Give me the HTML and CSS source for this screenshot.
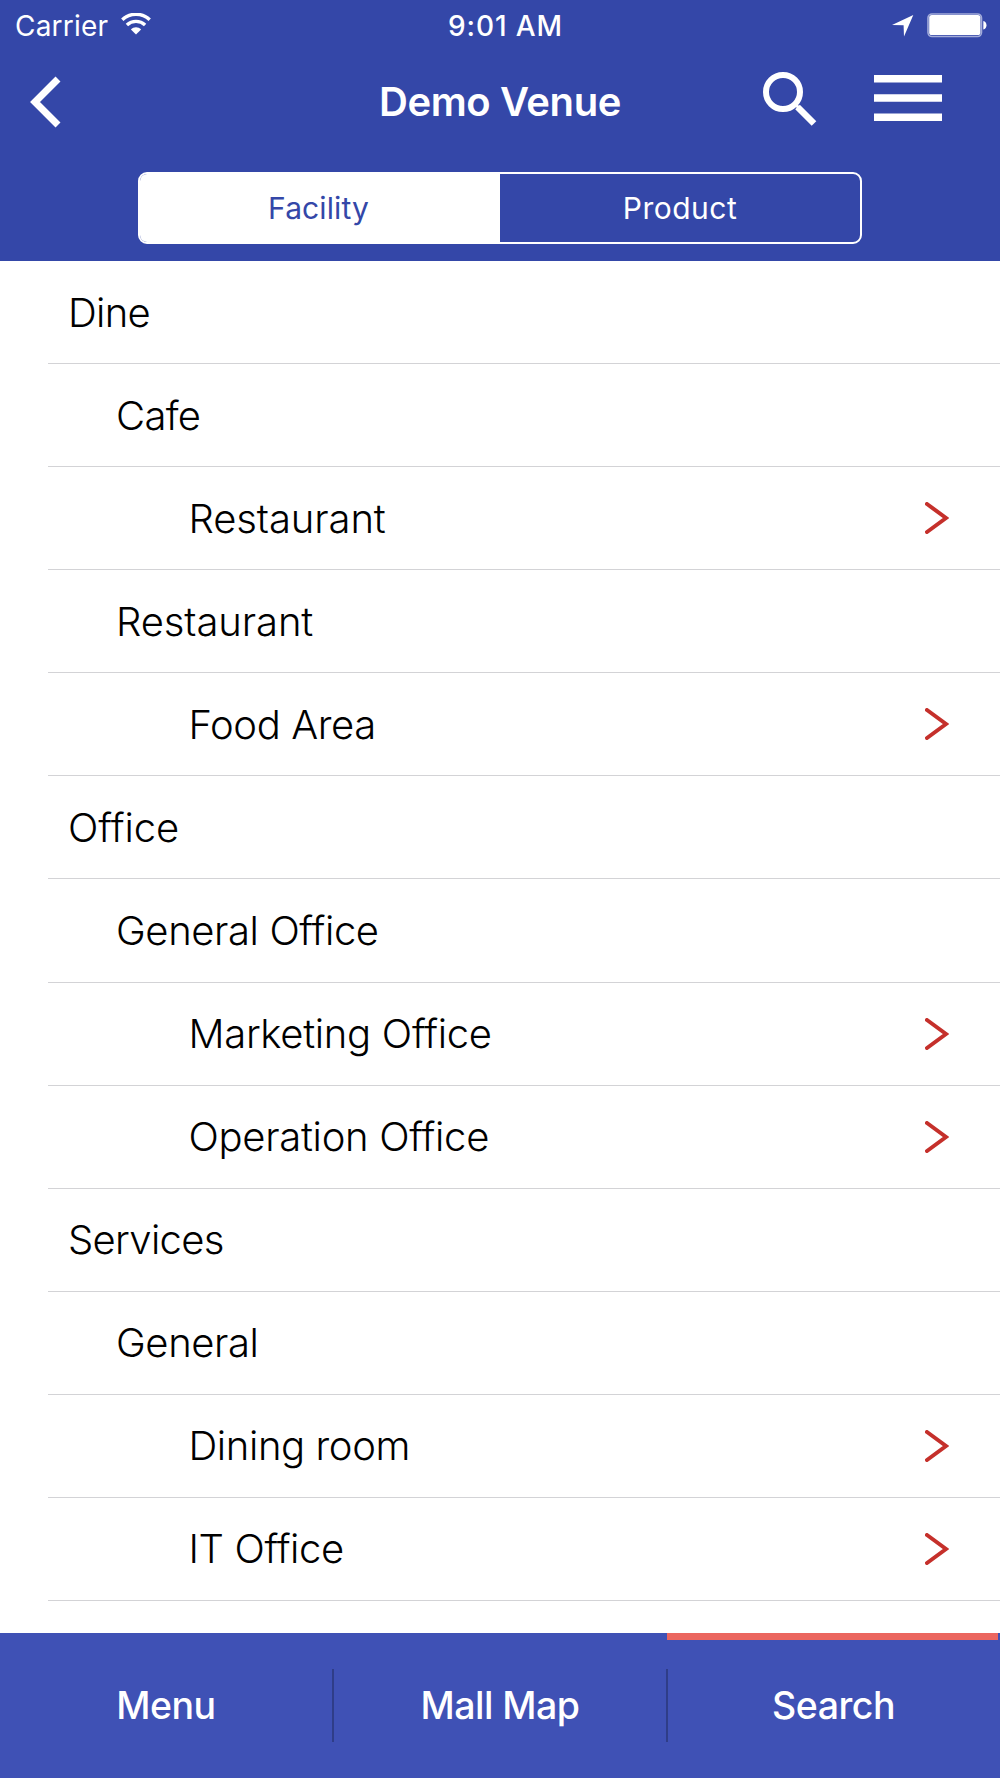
FILE: index.html
```html
<!DOCTYPE html>
<html lang="en">
<head>
<meta charset="utf-8">
<title>Demo Venue</title>
<link rel="stylesheet" href="styles.css">
</head>
<body>
<div class="app">
  <header class="header">
    <div class="status">
      <div class="status-left">
        <span class="carrier">Carrier</span>
        <svg class="wifi" width="30" height="22" viewBox="0 0 30 22" fill="none" stroke="#fff">
          <path d="M1.3 6.8C9 -0.6 21 -0.6 28.7 6.8" stroke-width="3.4"/>
          <path d="M5.9 11.9C11 7.2 19 7.2 24.1 11.9" stroke-width="3.4"/>
          <path d="M15 21.5L9.9 16.5C12.7 13.6 17.3 13.6 20.1 16.5Z" fill="#fff" stroke="none"/>
        </svg>
      </div>
      <span class="time">9:01 AM</span>
      <div class="status-right">
        <svg width="22" height="22" viewBox="0 0 22 22"><path d="M21.3 0L12 21.6L11.6 10.2L0 10Z" fill="#fff"/></svg>
        <svg width="60" height="25" viewBox="0 0 60 25">
          <rect x="1" y="1" width="53.5" height="22.5" rx="4" fill="none" stroke="#a3acd9" stroke-width="1.6"/>
          <rect x="2.2" y="2" width="51.2" height="20" rx="2.6" fill="#fff"/>
          <path d="M56.3 8C60.5 9 60.5 15.5 56.3 16.5Z" fill="#fff"/>
        </svg>
      </div>
    </div>
    <div class="navbar">
      <button class="icon-btn back" aria-label="Back"><svg width="31" height="52" viewBox="0 0 31 52"><path d="M28 3L5 26L28 49" fill="none" stroke="#fff" stroke-width="7"/></svg></button>
      <h1 class="title">Demo Venue</h1>
      <div class="actions">
        <button class="icon-btn" aria-label="Search"><svg width="54" height="54" viewBox="0 0 54 54" fill="none" stroke="#fff"><circle cx="20" cy="20" r="17" stroke-width="6"/><path d="M34.5 35L51 51.5" stroke-width="6.5"/><path d="M31 31L36 36" stroke-width="3"/></svg></button>
        <button class="icon-btn options" aria-label="Options"><svg width="68" height="46" viewBox="0 0 68 46" fill="#fff"><path d="M0 0h68v7.5H0zM0 19.2h68v7.5H0zM0 38.4h68v7.5H0z"/></svg></button>
      </div>
    </div>
    <div class="segments">
      <button class="segment active">Facility</button>
      <button class="segment">Product</button>
    </div>
  </header>
  <main class="list">
    <div class="row l1"><span class="tight">Dine</span></div>
    <div class="row l2"><span class="tight">Cafe</span></div>
    <div class="row l3"><span class="wide">Restaurant</span><svg class="chev" viewBox="0 0 24 32"><path d="M2 2L21 16L2 30"/></svg></div>
    <div class="row l2"><span class="wide">Restaurant</span></div>
    <div class="row l3"><span>Food Area</span><svg class="chev" viewBox="0 0 24 32"><path d="M2 2L21 16L2 30"/></svg></div>
    <div class="row l1"><span class="wide">Office</span></div>
    <div class="row l2"><span>General Office</span></div>
    <div class="row l3"><span class="roomy">Marketing Office</span><svg class="chev" viewBox="0 0 24 32"><path d="M2 2L21 16L2 30"/></svg></div>
    <div class="row l3"><span class="roomy">Operation Office</span><svg class="chev" viewBox="0 0 24 32"><path d="M2 2L21 16L2 30"/></svg></div>
    <div class="row l1"><span class="tight">Services</span></div>
    <div class="row l2"><span>General</span></div>
    <div class="row l3"><span>Dining room</span><svg class="chev" viewBox="0 0 24 32"><path d="M2 2L21 16L2 30"/></svg></div>
    <div class="row l3"><span>IT Office</span><svg class="chev" viewBox="0 0 24 32"><path d="M2 2L21 16L2 30"/></svg></div>
  </main>
  <nav class="tabs">
    <a class="tab">Menu</a>
    <a class="tab">Mall Map</a>
    <a class="tab current">Search</a>
  </nav>
</div>
</body>
</html>
```
FILE: styles.css
```css
* { box-sizing: border-box; }
body { margin: 0; font-family: Inter, "Liberation Sans", sans-serif; background: #fff; color: #000; }
button { border: 0; padding: 0; background: none; color: inherit; font: inherit; }
svg { display: block; }
h1 { margin: 0; }

.app { height: 1778px; display: flex; flex-direction: column; overflow: hidden; }

.header { height: 261px; flex: none; background: #3447a8; color: #fff; }
.status { height: 50px; padding: 0 13px 0 15px; display: grid; grid-template-columns: 1fr auto 1fr; align-items: center; font-size: 28px; line-height: 50px; }
.status-left { display: flex; align-items: center; gap: 13px; }
.carrier { letter-spacing: 0.2px; padding-top: 1px; }
.wifi { margin-bottom: 3px; }
.time { font-weight: 500; font-size: 28px; letter-spacing: 0.9px; padding: 1px 0 0 9px; }
.status-right { display: flex; justify-content: flex-end; align-items: center; gap: 13px; }

.navbar { height: 104px; padding: 0 58px 0 30px; display: grid; grid-template-columns: 1fr auto 1fr; align-items: center; }
.back { justify-self: start; }
.title { font-size: 40px; line-height: 104px; font-weight: 600; letter-spacing: -0.4px; margin-left: 28px; }
.actions { display: flex; justify-content: flex-end; align-items: center; gap: 57px; padding-bottom: 7px; }
.options { padding-bottom: 2px; }

.segments { width: 724px; height: 72px; margin: 18px auto 0; display: grid; grid-template-columns: 1fr 1fr; border: 2px solid #fff; border-radius: 9px; overflow: hidden; }
.segment { font-size: 30px; letter-spacing: 0.5px; color: #fff; }
.segment.active { background: #fff; color: #3447a8; letter-spacing: 0.1px; padding-right: 3px; }

.list { flex: 1; min-height: 0; padding-left: 48px; }
.row { height: 103.08px; display: flex; align-items: center; justify-content: space-between; padding: 0 51px 0 0; border-bottom: 1px solid #d3d3d6; font-size: 40px; font-weight: 300; letter-spacing: -0.4px; }
.row .tight { letter-spacing: -0.7px; }
.row .roomy { letter-spacing: -0.3px; }
.row .wide { letter-spacing: -0.1px; }
.l1 { padding-left: 20px; }
.l2 { padding-left: 68px; }
.l3 { padding-left: 140.5px; }
.chev { width: 24px; height: 32px; fill: none; stroke: #c5302b; stroke-width: 4; stroke-linecap: round; }

.tabs { height: 145px; flex: none; display: grid; grid-template-columns: 334px 334px 332px; background: #3f51b5; color: #fff; }
.tab { display: flex; align-items: center; justify-content: center; padding: 0 2px 1px 0; font-size: 37.5px; font-weight: 500; letter-spacing: -0.5px; background: linear-gradient(#2f3d88, #2f3d88) right center / 2px 73px no-repeat; }
.tab.current { margin-left: -1px; padding-right: 0; background: linear-gradient(#eb665f, #eb665f) left top / 331px 7px no-repeat; }
```
